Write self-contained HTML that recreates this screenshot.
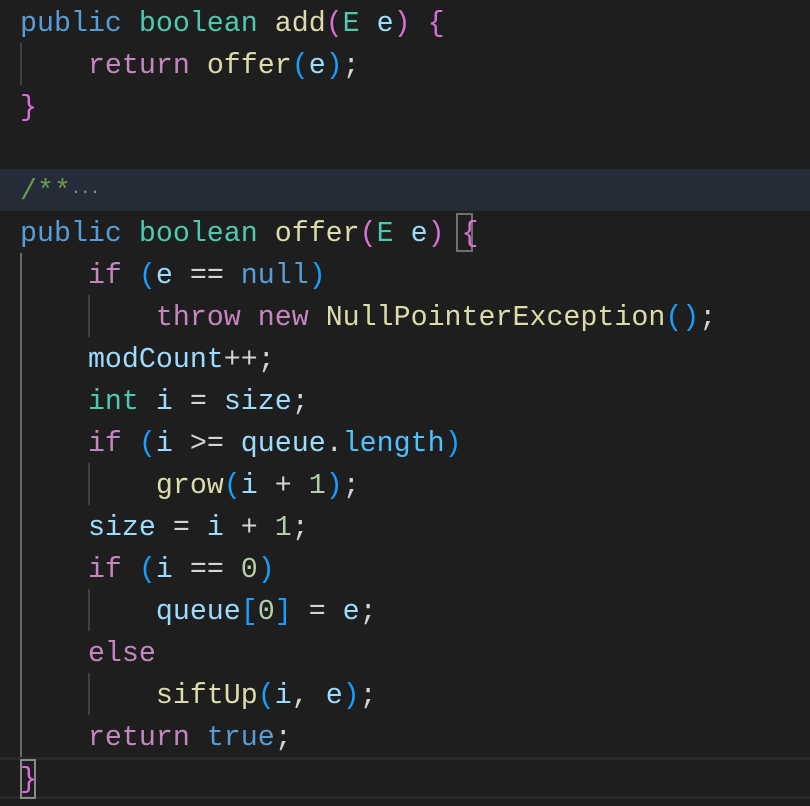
<!DOCTYPE html>
<html><head><meta charset="utf-8"><style>
html,body{margin:0;padding:0;background:#1e1e1e;width:810px;height:806px;overflow:hidden}
.ed{position:relative;width:810px;height:806px;font-family:"Liberation Mono",monospace;font-size:28.3px;color:#d4d4d4}
.l{position:absolute;left:20px;height:42px;line-height:46px;white-space:pre}
.k{color:#569cd6}.t{color:#4ec9b0}.f{color:#dcdcaa}.p{color:#da70d6}.b{color:#179fff}
.v{color:#9cdcfe}.c{color:#c586c0}.n{color:#b5cea8}.cm{color:#6a9955}.len{color:#4fc1ff}
.g{position:absolute;width:2px;background:#404040}
</style></head><body><div class="ed">
<div style="position:absolute;left:0;top:169px;width:810px;height:42px;background:#262c37"></div>
<div style="position:absolute;left:0;top:757px;width:810px;height:42px;border-top:3px solid #282828;border-bottom:3px solid #282828;box-sizing:border-box"></div>
<div class="g" style="left:20px;top:43px;height:42px"></div>
<div class="g" style="left:20px;top:253px;height:504px;background:#6a6a6a"></div>
<div class="g" style="left:88px;top:295px;height:42px"></div>
<div class="g" style="left:88px;top:463px;height:42px"></div>
<div class="g" style="left:88px;top:589px;height:42px"></div>
<div class="g" style="left:88px;top:673px;height:42px"></div>
<div style="position:absolute;left:456px;top:213px;width:17px;height:39px;border:2px solid #707070;box-sizing:border-box"></div>
<div style="position:absolute;left:20px;top:759px;width:16px;height:40px;border:2px solid #8a8a8a;box-sizing:border-box"></div>
<div class="l" style="top:1px"><span class="k">public</span> <span class="t">boolean</span> <span class="f">add</span><span class="p">(</span><span class="t">E</span> <span class="v">e</span><span class="p">)</span> <span class="p">{</span></div>
<div class="l" style="top:43px">    <span class="c">return</span> <span class="f">offer</span><span class="b">(</span><span class="v">e</span><span class="b">)</span>;</div>
<div class="l" style="top:85px"><span class="p">}</span></div>
<div class="l" style="top:169px"><span class="cm">/**</span><span style="color:#999;font-size:16px;vertical-align:3px">···</span></div>
<div class="l" style="top:211px"><span class="k">public</span> <span class="t">boolean</span> <span class="f">offer</span><span class="p">(</span><span class="t">E</span> <span class="v">e</span><span class="p">)</span> <span class="p">{</span></div>
<div class="l" style="top:253px">    <span class="c">if</span> <span class="b">(</span><span class="v">e</span> == <span class="k">null</span><span class="b">)</span></div>
<div class="l" style="top:295px">        <span class="c">throw</span> <span class="c">new</span> <span class="f">NullPointerException</span><span class="b">()</span>;</div>
<div class="l" style="top:337px">    <span class="v">modCount</span>++;</div>
<div class="l" style="top:379px">    <span class="t">int</span> <span class="v">i</span> = <span class="v">size</span>;</div>
<div class="l" style="top:421px">    <span class="c">if</span> <span class="b">(</span><span class="v">i</span> &gt;= <span class="v">queue</span>.<span class="len">length</span><span class="b">)</span></div>
<div class="l" style="top:463px">        <span class="f">grow</span><span class="b">(</span><span class="v">i</span> + <span class="n">1</span><span class="b">)</span>;</div>
<div class="l" style="top:505px">    <span class="v">size</span> = <span class="v">i</span> + <span class="n">1</span>;</div>
<div class="l" style="top:547px">    <span class="c">if</span> <span class="b">(</span><span class="v">i</span> == <span class="n">0</span><span class="b">)</span></div>
<div class="l" style="top:589px">        <span class="v">queue</span><span class="b">[</span><span class="n">0</span><span class="b">]</span> = <span class="v">e</span>;</div>
<div class="l" style="top:631px">    <span class="c">else</span></div>
<div class="l" style="top:673px">        <span class="f">siftUp</span><span class="b">(</span><span class="v">i</span>, <span class="v">e</span><span class="b">)</span>;</div>
<div class="l" style="top:715px">    <span class="c">return</span> <span class="k">true</span>;</div>
<div class="l" style="top:757px"><span class="p">}</span></div>
</div></body></html>
